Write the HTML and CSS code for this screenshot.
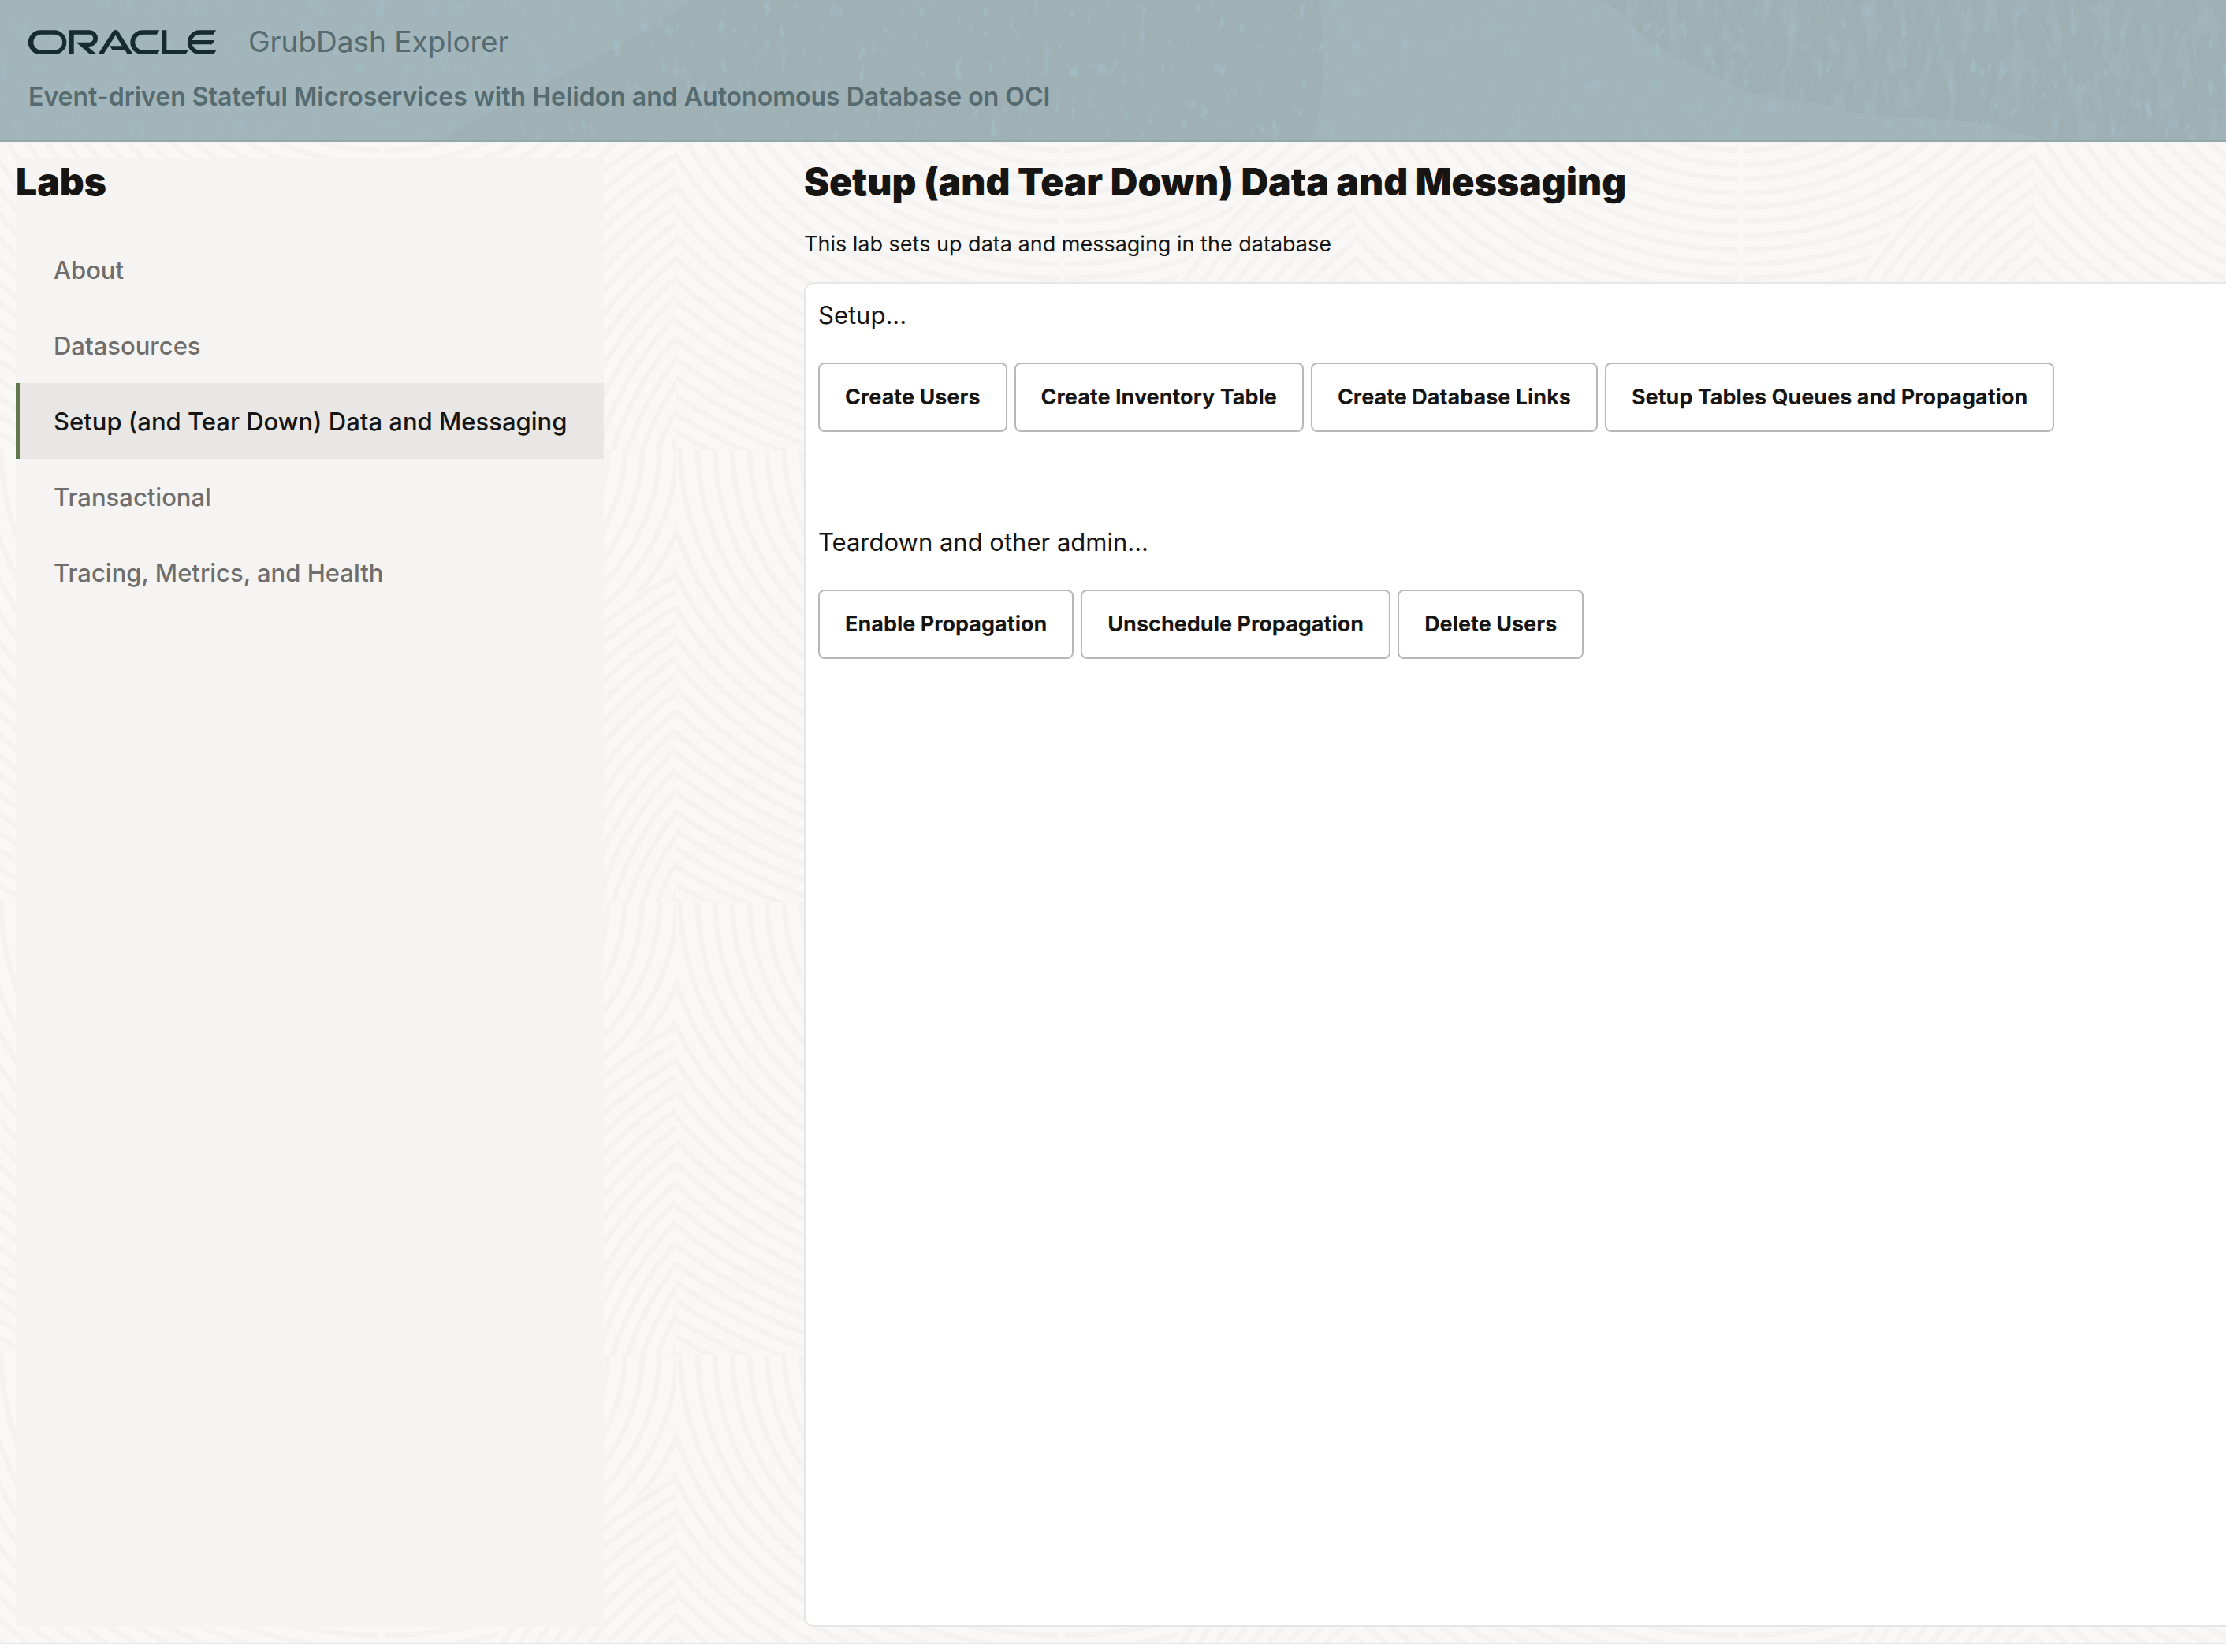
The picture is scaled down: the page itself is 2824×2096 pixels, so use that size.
FILE: index.html
```html
<!DOCTYPE html>
<html lang="en">
<head>
<meta charset="utf-8">
<meta name="viewport" content="width=device-width, initial-scale=1">
<title>GrubDash Explorer</title>
<link rel="stylesheet" href="styles.css">
</head>
<body>
<header class="banner">
  <div class="brand">
    <svg class="logo" viewBox="0 0 231 30" role="img" aria-label="Oracle"><path d="M99.61,19.52h15.24l-8.05-13L92,30H85.27l18-28.17a4.29,4.29,0,0,1,7-.05L128.32,30h-6.73l-3.17-5.25H103l-3.36-5.23m69.93,5.23V.28h-5.72V27.16a2.76,2.76,0,0,0,.85,2,2.89,2.89,0,0,0,2.08.87h26l3.39-5.25H169.54M75,20.38A10,10,0,0,0,75,.28H50V30h5.71V5.54H74.65a4.81,4.81,0,0,1,0,9.62H58.54L75.6,30h8.29L72.43,20.38H75M14.88,30H32.15a14.86,14.86,0,0,0,0-29.71H14.88a14.86,14.86,0,1,0,0,29.71m16.88-5.23H15.26a9.62,9.62,0,0,1,0-19.23h16.5a9.62,9.62,0,1,1,0,19.23M140.25,30h17.63l3.34-5.23H140.64a9.62,9.62,0,1,1,0-19.23h16.75l3.38-5.25H140.25a14.86,14.86,0,1,0,0,29.71m69.87-5.23a9.62,9.62,0,0,1-9.26-7h24.42l3.36-5.24H200.86a9.61,9.61,0,0,1,9.26-7h16.76l3.35-5.25h-20.5a14.86,14.86,0,0,0,0,29.71h17.63l3.35-5.23h-20.6"/></svg>
    <span class="product">GrubDash Explorer</span>
  </div>
  <p class="tagline">Event-driven Stateful Microservices with Helidon and Autonomous Database on OCI</p>
</header>

<div class="content" id="content">
  <aside class="sidebar">
    <h2 class="heading">Labs</h2>
    <nav aria-label="Labs">
      <ul class="labs">
        <li><a class="lab" href="#about">About</a></li>
        <li><a class="lab" href="#datasources">Datasources</a></li>
        <li><a class="lab lab-current" href="#setup" aria-current="page">Setup (and Tear Down) Data and Messaging</a></li>
        <li><a class="lab" href="#transactional">Transactional</a></li>
        <li><a class="lab" href="#tracing">Tracing, Metrics, and Health</a></li>
      </ul>
    </nav>
  </aside>

  <main class="main">
    <h1 class="heading">Setup (and Tear Down) Data and Messaging</h1>
    <p class="summary">This lab sets up data and messaging in the database</p>
    <div class="panel">
      <section class="group">
        <h3 class="group-title">Setup...</h3>
        <div class="actions">
          <button class="action" type="button">Create Users</button>
          <button class="action" type="button">Create Inventory Table</button>
          <button class="action" type="button">Create Database Links</button>
          <button class="action" type="button">Setup Tables Queues and Propagation</button>
        </div>
      </section>
      <section class="group">
        <h3 class="group-title">Teardown and other admin...</h3>
        <div class="actions">
          <button class="action" type="button">Enable Propagation</button>
          <button class="action" type="button">Unschedule Propagation</button>
          <button class="action" type="button">Delete Users</button>
        </div>
      </section>
    </div>
  </main>
</div>
<footer class="footer"></footer>
<script src="pattern.js"></script>
</body>
</html>
```
FILE: styles.css
```css
* {
  box-sizing: border-box;
}

body {
  margin: 0;
  min-height: 100vh;
  display: flex;
  flex-direction: column;
  background: #fff;
  color: #161513;
  font-family: Inter, "Liberation Sans", sans-serif;
  font-size: 31px;
  line-height: 40px;
}

h1, h2, h3, p, ul {
  margin: 0;
  padding: 0;
}

/* Header */

.banner {
  padding: 29px 36px 35px;
  border-bottom: 2px solid #94a8ab;
  color: #566b70;
  background-color: #a2b5ba;
  background-image: url("data:image/svg+xml,%3Csvg xmlns='http://www.w3.org/2000/svg' width='2824' height='178'%3E%3Cdefs%3E%3Cfilter id='f' x='0' y='0' width='100%25' height='100%25' color-interpolation-filters='sRGB'%3E%3CfeTurbulence type='fractalNoise' baseFrequency='.06 .02' numOctaves='4' seed='7'/%3E%3CfeColorMatrix values='0 0 0 0 .635 0 0 0 0 .71 0 0 0 0 .73 0 4 0 0 -1.9'/%3E%3CfeComposite in2='SourceGraphic' operator='in'/%3E%3C/filter%3E%3Cfilter id='g' x='0' y='0' width='100%25' height='100%25' color-interpolation-filters='sRGB'%3E%3CfeTurbulence type='fractalNoise' baseFrequency='.09 .04' numOctaves='3' seed='3'/%3E%3CfeColorMatrix values='0 0 0 0 .635 0 0 0 0 .73 0 0 0 0 .76 0 5 0 0 -3.2'/%3E%3C/filter%3E%3C/defs%3E%3Cpath fill='%239fb1b5' d='M880 0Q800 50 735 85Q640 130 560 178H1665Q1690 90 1672 0Z'/%3E%3Cpath fill='%239eb0b4' d='M2030 0Q2060 15 2070 35Q2100 60 2125 72L2200 110Q2240 125 2300 130Q2360 148 2410 149Q2480 150 2530 160L2595 178H2824V0Z'/%3E%3Cpath filter='url(%23f)' d='M2030 0Q2060 15 2070 35Q2100 60 2125 72L2200 110Q2240 125 2300 130Q2360 148 2410 149Q2480 150 2530 160L2595 178H2824V0Z'/%3E%3Crect width='2824' height='178' filter='url(%23g)'/%3E%3C/svg%3E");
}

.brand {
  display: flex;
  align-items: center;
  gap: 40px;
  height: 48px;
}

.logo {
  width: 239px;
  height: 31px;
  fill: #162b30;
}

.product {
  font-size: 37px;
}

.tagline {
  margin-top: 26px;
  font-size: 32px;
  font-weight: 600;
}

/* Two columns on the patterned backdrop */

.content {
  flex: 1;
  display: grid;
  grid-template-columns: 746px 1fr;
  column-gap: 254px;
  padding: 20px 0 20px 20px;
  border-bottom: 2px solid #e6e6e6;
  background-color: #f9f8f6;
  background-position: -5px -183px;
}

.heading {
  font-size: 48px;
  line-height: 62px;
  font-weight: 900;
}

.sidebar {
  background: #f5f4f2;
}

.labs {
  margin-top: 32px;
  list-style: none;
}

.lab {
  display: block;
  padding: 29px 42px 27px;
  border-left: 6px solid transparent;
  color: #6f6e6c;
  font-weight: 500;
  text-decoration: none;
  white-space: nowrap;
}

.lab-current {
  border-left-color: #5f7849;
  background: #e8e7e5;
  color: #161513;
}

.main {
  display: flex;
  flex-direction: column;
}

.summary {
  margin-top: 28px;
  font-size: 27px;
}

.panel {
  flex: 1;
  display: flex;
  flex-direction: column;
  gap: 120px;
  margin-top: 28px;
  padding: 20px 0 20px 16px;
  border: 2px solid #e6e6e6;
  border-right: 0;
  border-radius: 12px 0 0 12px;
  background: #fff;
}

.group-title {
  font-size: 31px;
  font-weight: 400;
}

.actions {
  display: flex;
  gap: 9px;
  margin-top: 40px;
}

.action {
  padding: 22px 32px;
  border: 2px solid #b8b8b8;
  border-radius: 8px;
  background: #fff;
  color: #161513;
  font: 700 27px/40px Inter, "Liberation Sans", sans-serif;
}

.footer {
  height: 10px;
}
```
FILE: pattern.js
```javascript
// Builds the repeating contour-line tile behind the two columns.
(function () {
  var w = 862, h = 574, bowl = '', fan = '', k;
  for (k = 1; k < 41; k++) {
    bowl += "<ellipse cx='490' cy='-4' rx='" + 22 * k + "' ry='" + 18 * k + "'/>";
  }
  for (k = 0; k < 34; k++) {
    fan += "<circle cx='1158' cy='692' r='" + (628 - 18 * k) + "'/>";
  }
  var svg = "<svg xmlns='http://www.w3.org/2000/svg' width='" + w + "' height='" + h + "'>" +
    "<clipPath id='a'><path d='M0 0H486V574H0Z'/></clipPath>" +
    "<clipPath id='b'><path d='M494 0H862V153A628 628 0 0 0 542 574H494Z'/></clipPath>" +
    "<clipPath id='c'><path d='M862 574V150A628 628 0 0 0 540 574Z'/></clipPath>" +
    "<g fill='none' stroke='#f4f3f1' stroke-width='7'>" +
    "<g clip-path='url(#a)'>" + bowl + "</g>" +
    "<g clip-path='url(#b)'>" + bowl + "</g>" +
    "<g clip-path='url(#c)'>" + fan + "</g></g></svg>";
  document.getElementById('content').style.backgroundImage =
    'url("data:image/svg+xml,' + encodeURIComponent(svg) + '")';
})();
```
